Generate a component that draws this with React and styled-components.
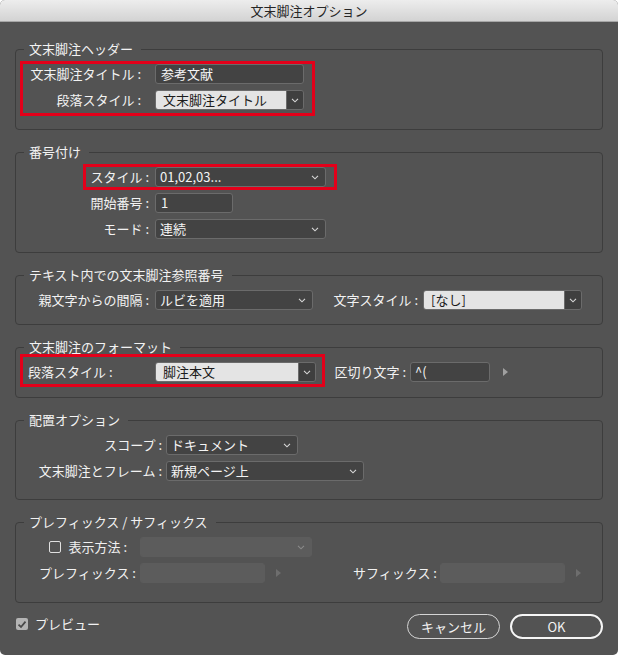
import React from "react";
import styled, { createGlobalStyle } from "styled-components";

const GlobalStyle = createGlobalStyle`
  *, *::before, *::after { box-sizing: border-box; }
  html, body { margin: 0; padding: 0; background: #ffffff; }
  body { font-family: "Noto Sans CJK JP", "Noto Sans", sans-serif; }
`;

function Chevron({ color = "#d8d8d8" }) {
  return (
    <svg width="8" height="5" viewBox="0 0 8 5">
      <polyline points="1,0.8 4,3.8 7,0.8" fill="none" stroke={color} strokeWidth="1.1" />
    </svg>
  );
}

function Tick() {
  return (
    <svg width="10" height="9" viewBox="0 0 10 9">
      <polyline points="1.5,4.6 4,7 8.5,1.6" fill="none" stroke="#4a4a4a" strokeWidth="1.8" />
    </svg>
  );
}

function Select({ w, value, disabled }) {
  return (
    <SelectBox $w={w} $disabled={disabled}>
      <Value>{value}</Value>
      <Chevron color={disabled ? "#8a8a8a" : "#d8d8d8"} />
    </SelectBox>
  );
}

function LightSelect({ w, value }) {
  return (
    <LightBox $w={w}>
      <LightValue>{value}</LightValue>
      <ArrowCell>
        <Chevron />
      </ArrowCell>
    </LightBox>
  );
}

export default function App() {
  return (
    <>
      <GlobalStyle />
      <Window>
        <TitleBar>文末脚注オプション</TitleBar>
        <Body>
          <Group $pb={19}>
            <Legend>文末脚注ヘッダー</Legend>
            <Highlight $m="-3px 0 -6px 0" $p="0 8px 3px 0">
              <Row>
                <Label $w={118} $gap={14}>文末脚注タイトル :</Label>
                <Field $w={149} $pl={5}>参考文献</Field>
              </Row>
              <Row>
                <Label $w={118} $gap={14}>段落スタイル :</Label>
                <LightSelect w={149} value="文末脚注タイトル" />
              </Row>
            </Highlight>
          </Group>

          <Group $pb={13}>
            <Legend>番号付け</Legend>
            <Highlight $m="-3px 0 -3px 63px" $p="0 8px 0 0">
              <Row>
                <Label $w={63}>スタイル :</Label>
                <Select w={171} value="01,02,03..." />
              </Row>
            </Highlight>
            <Row>
              <Label $w={129}>開始番号 :</Label>
              <Field $w={78}>1</Field>
            </Row>
            <Row>
              <Label $w={129}>モード :</Label>
              <Select w={171} value="連続" />
            </Row>
          </Group>

          <Group $pb={14}>
            <Legend>テキスト内での文末脚注参照番号</Legend>
            <Row>
              <Label $w={129}>親文字からの間隔 :</Label>
              <Select w={158} value="ルビを適用" />
              <Label $w={105} $gap={5}>文字スタイル :</Label>
              <LightSelect w={159} value="[なし]" />
            </Row>
          </Group>

          <Group $pb={15}>
            <Legend>文末脚注のフォーマット</Legend>
            <Row>
              <Highlight $row $m="-8px 0 -5px 0" $p="5px 6px 2px 0">
                <Label $w={132} $gap={0} $left $pl={5}>段落スタイル :</Label>
                <LightSelect w={161} value="脚注本文" />
              </Highlight>
              <Label $w={81} $gap={4}>区切り文字 :</Label>
              <Field $w={80} $pl={4}>^(</Field>
              <Arrow $ml={13} />
            </Row>
          </Group>

          <Group $pb={18}>
            <Legend>配置オプション</Legend>
            <Row>
              <Label $w={142} $gap={4}>スコープ :</Label>
              <Select w={132} value="ドキュメント" />
            </Row>
            <Row>
              <Label $w={142} $gap={4}>文末脚注とフレーム :</Label>
              <Select w={198} value="新規ページ上" />
            </Row>
          </Group>

          <Group $pb={19}>
            <Legend>プレフィックス / サフィックス</Legend>
            <Row>
              <CheckLabel $w={107}>
                <Box />
                表示方法 :
              </CheckLabel>
              <Select w={172} value="" disabled />
            </Row>
            <Row>
              <Label $w={116} $gap={4}>プレフィックス :</Label>
              <Field $w={125} $disabled />
              <Arrow $ml={11} $dim />
              <Label $w={156} $gap={3}>サフィックス :</Label>
              <Field $w={125} $disabled />
              <Arrow $ml={11} $dim />
            </Row>
          </Group>
        </Body>

        <Footer>
          <Preview>
            <Box $checked>
              <Tick />
            </Box>
            プレビュー
          </Preview>
          <Buttons>
            <Button>キャンセル</Button>
            <Button $primary>OK</Button>
          </Buttons>
        </Footer>
      </Window>
    </>
  );
}

const Window = styled.div`
  width: 618px;
  height: 655px;
  background: #535353;
  border-radius: 5px;
  overflow: hidden;
  display: flex;
  flex-direction: column;
  font-family: "Noto Sans CJK JP", "Liberation Sans", sans-serif;
  font-size: 13px;
  color: #f0f0f0;
`;

const TitleBar = styled.div`
  height: 22px;
  border-bottom: 1px solid #a6a6a6;
  background: linear-gradient(#ededed, #d3d3d3);
  display: flex;
  align-items: center;
  justify-content: center;
  color: #262626;
  font-size: 13px;
`;

const Body = styled.div`
  display: flex;
  flex-direction: column;
  gap: 14px;
  padding: 19px 15px 0;
`;

const Group = styled.fieldset`
  margin: 0;
  min-width: 0;
  border: 1px solid #3d3d3d;
  border-radius: 4px;
  padding: 7px 0 ${(p) => p.$pb}px 4px;
  display: flex;
  flex-direction: column;
  gap: 6px;
`;

const Legend = styled.legend`
  margin-left: 4px;
  padding: 0 8px 0 5px;
  line-height: 16px;
  font-size: 13px;
  color: #f2f2f2;
`;

const Highlight = styled.div`
  flex: none;
  align-self: ${(p) => (p.$row ? "auto" : "flex-start")};
  display: flex;
  flex-direction: ${(p) => (p.$row ? "row" : "column")};
  align-items: ${(p) => (p.$row ? "center" : "stretch")};
  gap: ${(p) => (p.$row ? 0 : 6)}px;
  border: 3px solid #e3001a;
  margin: ${(p) => p.$m};
  padding: ${(p) => p.$p};
`;

const Row = styled.div`
  display: flex;
  align-items: center;
  height: 20px;
`;

const Label = styled.span`
  flex: none;
  width: ${(p) => (p.$w ? `${p.$w}px` : "auto")};
  margin-right: ${(p) => p.$gap ?? 6}px;
  padding-left: ${(p) => p.$pl ?? 0}px;
  text-align: ${(p) => (p.$left ? "left" : "right")};
  white-space: nowrap;
  line-height: 20px;
  color: #f2f2f2;
`;

const CheckLabel = styled.span`
  flex: none;
  width: ${(p) => p.$w}px;
  margin-right: 13px;
  display: flex;
  align-items: center;
  justify-content: flex-end;
  gap: 7px;
  white-space: nowrap;
  line-height: 20px;
`;

const Field = styled.div`
  flex: none;
  width: ${(p) => p.$w}px;
  height: 20px;
  border: 1px solid ${(p) => (p.$disabled ? "#5c5c5c" : "#6b6b6b")};
  border-radius: 3px;
  background: ${(p) => (p.$disabled ? "#5c5c5c" : "#434343")};
  padding-left: ${(p) => p.$pl ?? 5}px;
  line-height: 18px;
  color: #f4f4f4;
  white-space: nowrap;
`;

const SelectBox = styled.div`
  flex: none;
  width: ${(p) => p.$w}px;
  height: 20px;
  display: flex;
  align-items: center;
  border: 1px solid ${(p) => (p.$disabled ? "#5c5c5c" : "#6b6b6b")};
  border-radius: 3px;
  background: ${(p) => (p.$disabled ? "#5c5c5c" : "#434343")};
  padding: 0 6px 0 4px;
`;

const Value = styled.span`
  flex: 1;
  line-height: 18px;
  color: #f4f4f4;
  white-space: nowrap;
`;

const LightBox = styled.div`
  flex: none;
  width: ${(p) => p.$w}px;
  height: 20px;
  display: flex;
  border: 1px solid #6b6b6b;
  border-radius: 3px;
  overflow: hidden;
`;

const LightValue = styled.span`
  flex: 1;
  background: #e4e4e4;
  color: #1c1c1c;
  padding-left: 7px;
  line-height: 18px;
  white-space: nowrap;
`;

const ArrowCell = styled.span`
  flex: none;
  width: 17px;
  background: #3f3f3f;
  border-left: 1px solid #6b6b6b;
  display: flex;
  align-items: center;
  justify-content: center;
`;

const Arrow = styled.span`
  flex: none;
  width: 0;
  height: 0;
  margin-left: ${(p) => p.$ml}px;
  border-left: 5px solid ${(p) => (p.$dim ? "#6e6e6e" : "#a0a0a0")};
  border-top: 4px solid transparent;
  border-bottom: 4px solid transparent;
`;

const Box = styled.span`
  flex: none;
  width: 12px;
  height: 12px;
  border-radius: 2px;
  background: ${(p) => (p.$checked ? "#b4b4b4" : "transparent")};
  border: ${(p) => (p.$checked ? "none" : "1px solid #e0e0e0")};
  display: flex;
  align-items: center;
  justify-content: center;
`;

const Footer = styled.div`
  display: flex;
  align-items: flex-start;
  justify-content: space-between;
  padding: 11px 15px 0 16px;
`;

const Preview = styled.span`
  display: flex;
  align-items: center;
  gap: 7px;
  margin-top: 2px;
  line-height: 16px;
  color: #f2f2f2;
`;

const Buttons = styled.div`
  display: flex;
  gap: 10px;
`;

const Button = styled.button`
  width: 93px;
  height: 25px;
  padding: 0;
  border-radius: 13px;
  background: transparent;
  border: ${(p) => (p.$primary ? "2px solid #f6f6f6" : "1.5px solid #d4d4d4")};
  color: #f2f2f2;
  font-family: inherit;
  font-size: 13px;
`;
